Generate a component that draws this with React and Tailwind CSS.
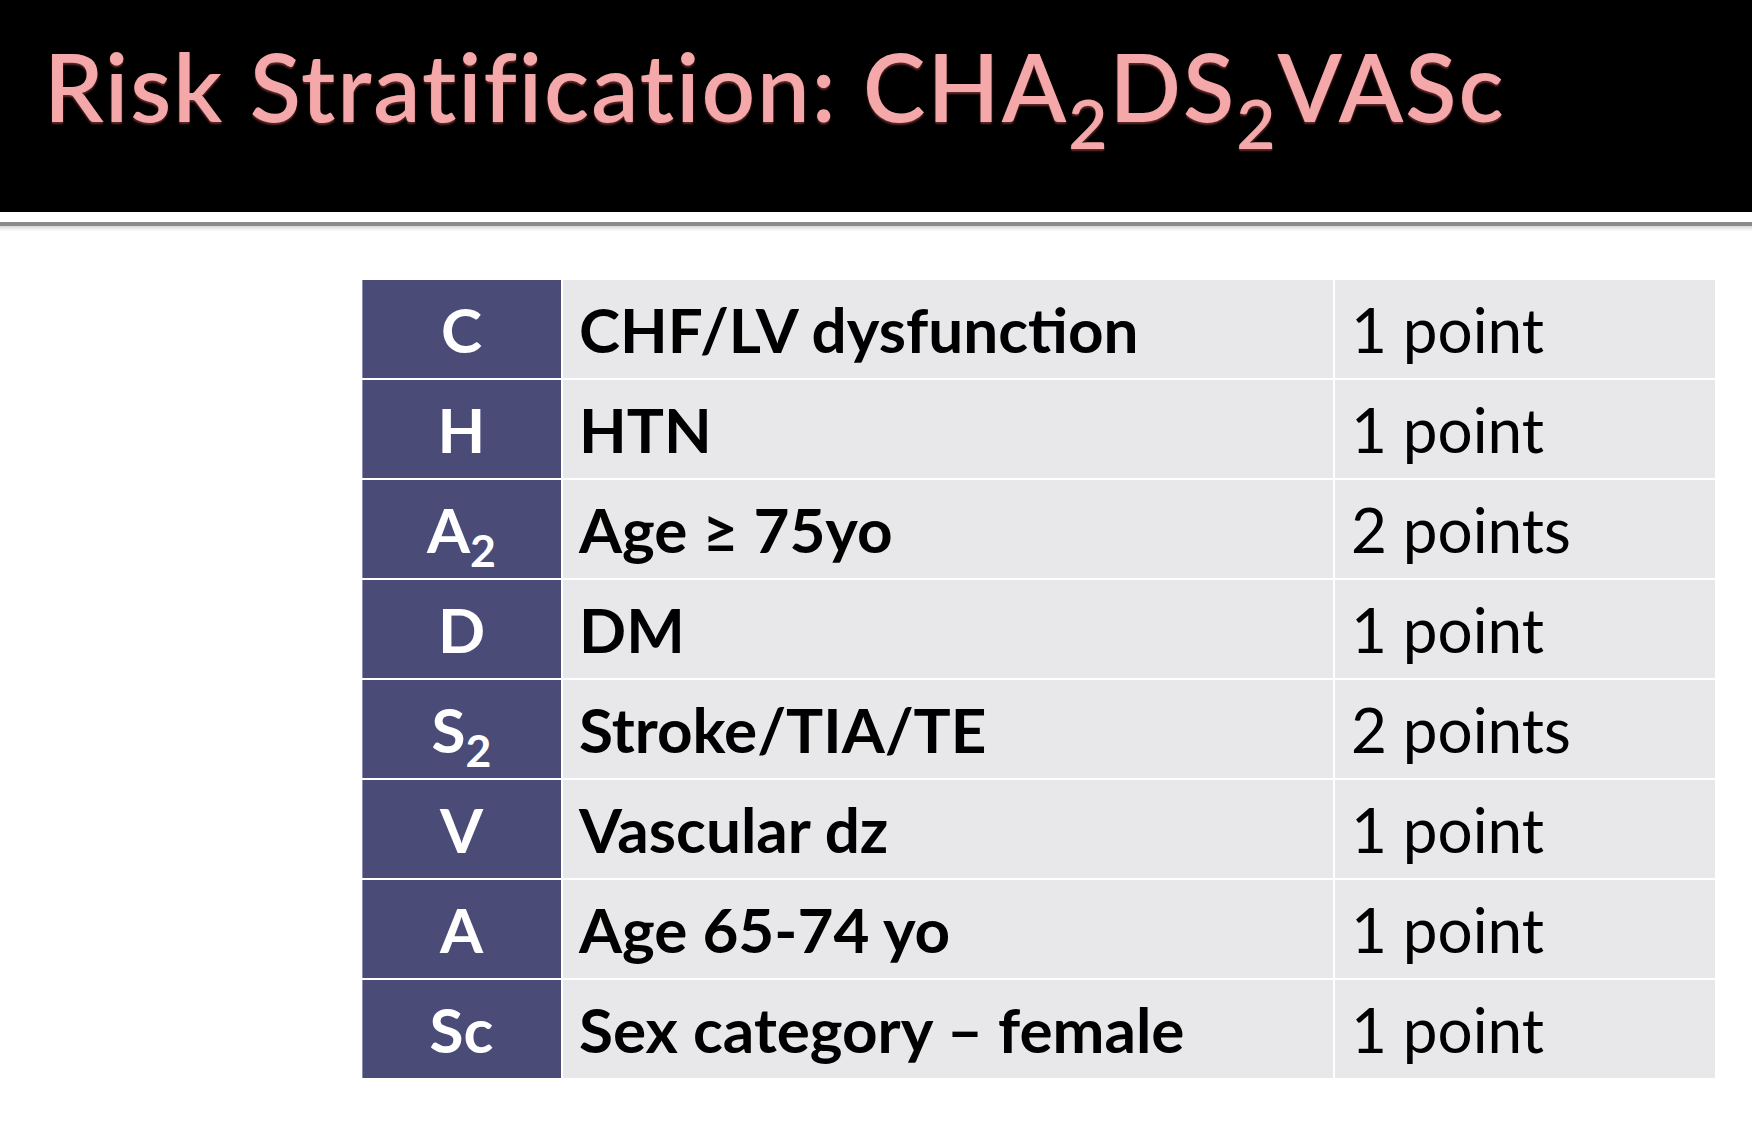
const rows = [
  { code: "C", label: "CHF/LV dysfunction", points: "1 point" },
  { code: "H", label: "HTN", points: "1 point" },
  { code: "A", sub: "2", label: "Age ≥ 75yo", points: "2 points" },
  { code: "D", label: "DM", points: "1 point" },
  { code: "S", sub: "2", label: "Stroke/TIA/TE", points: "2 points" },
  { code: "V", label: "Vascular dz", points: "1 point" },
  { code: "A", label: "Age 65-74 yo", points: "1 point" },
  { code: "Sc", label: "Sex category – female", points: "1 point" },
];

const Sub = ({ children, className = "top-[0.32em]" }) => (
  <span className={`relative text-[0.72em] ${className}`}>{children}</span>
);

export default function App() {
  return (
    <div className="w-[1752px] h-[1122px] bg-white font-['Lato',sans-serif] overflow-hidden">
      {/* Title bar */}
      <div className="h-[212px] bg-black pl-[44px] pt-[36px]">
        <h1 className="text-[94px] leading-[100px] font-semibold text-[#f5a8a9] tracking-[2px] [text-shadow:0_2px_2px_rgba(140,60,60,0.7)]">
          Risk Stratification: CHA<Sub className="top-[0.4em]">2</Sub>DS
          <Sub className="top-[0.4em]">2</Sub>VASc
        </h1>
      </div>
      <div className="mt-[10px] h-[4px] bg-[#8a8a8a]" />
      <div className="h-[5px] bg-gradient-to-b from-[#d6d6d6] to-white" />

      {/* Score table */}
      <div className="pl-[362px] pt-[49px]">
        <div className="grid grid-cols-[199px_770px_380px] gap-[2px] w-[1353px]">
          {rows.map((row, i) => (
            <div key={i} className="contents">
              <div className="h-[98px] bg-[#4a4c77] flex items-center justify-center text-white font-bold text-[62px] shadow-[inset_1px_0_0_#8c8db0]">
                <span>
                  {row.code}
                  {row.sub && <Sub>{row.sub}</Sub>}
                </span>
              </div>
              <div className="h-[98px] bg-[#e8e8ea] flex items-center pl-[16px] text-black font-bold text-[62px]">
                {row.label}
              </div>
              <div className="h-[98px] bg-[#e8e8ea] flex items-center pl-[16px] text-black text-[62px]">
                {row.points}
              </div>
            </div>
          ))}
        </div>
      </div>
    </div>
  );
}
